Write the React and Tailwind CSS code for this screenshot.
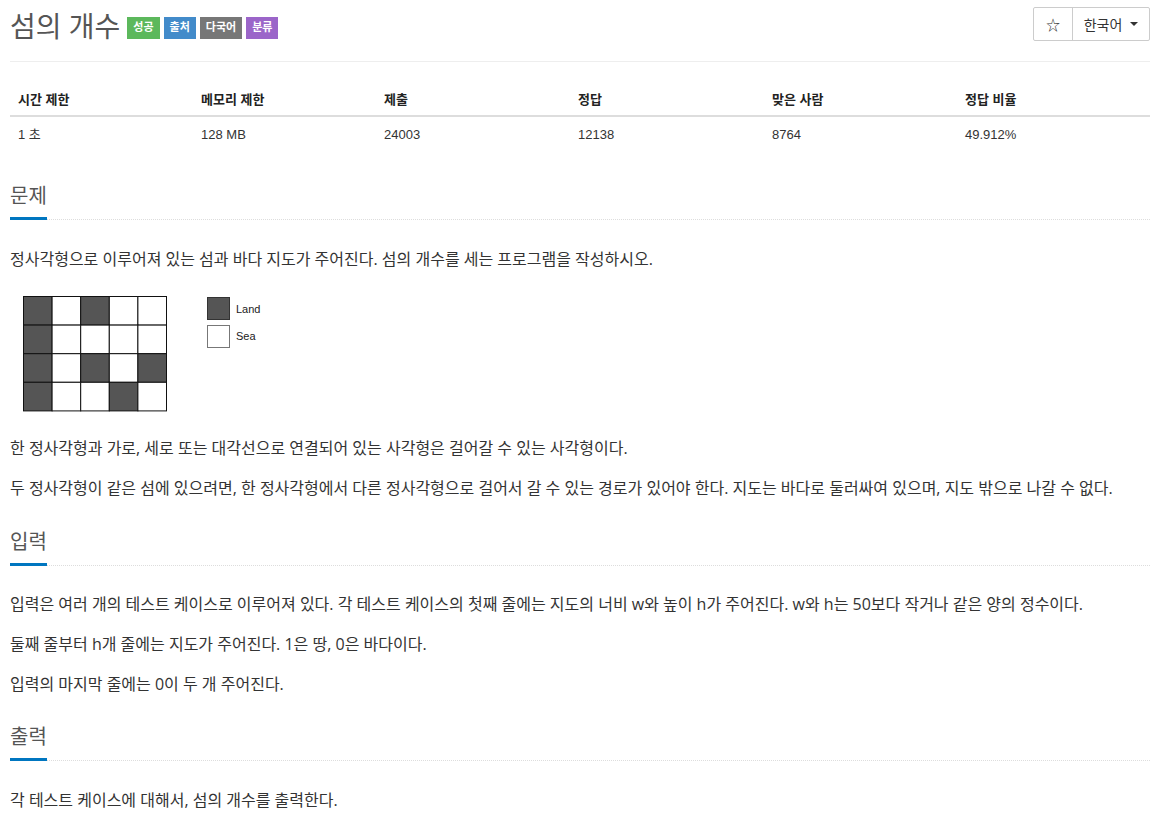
const stats = [
  { label: "시간 제한", value: "1 초" },
  { label: "메모리 제한", value: "128 MB" },
  { label: "제출", value: "24003" },
  { label: "정답", value: "12138" },
  { label: "맞은 사람", value: "8764" },
  { label: "정답 비율", value: "49.912%" },
];

const badges = [
  { text: "성공", cls: "bg-[#5cb85c]" },
  { text: "출처", cls: "bg-[#428bca]" },
  { text: "다국어", cls: "bg-[#777777]" },
  { text: "분류", cls: "bg-[#9b65c9]" },
];

const grid = [
  [1, 0, 1, 0, 0],
  [1, 0, 0, 0, 0],
  [1, 0, 1, 0, 1],
  [1, 0, 0, 1, 0],
];

function IslandMap() {
  const size = 28.6;
  return (
    <svg width="280" height="124" viewBox="0 0 280 124">
      <g transform="translate(13.5,8.5)">
        {grid.map((row, r) =>
          row.map((v, c) => (
            <rect
              key={`${r}-${c}`}
              x={c * size}
              y={r * size}
              width={size}
              height={size}
              fill={v ? "#555555" : "#ffffff"}
              stroke="#111"
              strokeWidth="1"
            />
          ))
        )}
      </g>
      <rect x="197.5" y="9.5" width="22" height="22" fill="#555555" stroke="#333" />
      <rect x="197.5" y="37.5" width="22" height="22" fill="#ffffff" stroke="#777" />
      <text x="226" y="25" fontSize="11" fontFamily="Liberation Sans, Arial, sans-serif" fill="#222">
        Land
      </text>
      <text x="226" y="52" fontSize="11" fontFamily="Liberation Sans, Arial, sans-serif" fill="#222">
        Sea
      </text>
    </svg>
  );
}

function Headline({ children }) {
  return (
    <div className="border-b border-dotted border-[#ddd] flex">
      <h2 className="text-[20px] leading-[28px] text-[#555] pb-[7px] border-b-[3px] border-[#0076c0] -mb-px">
        {children}
      </h2>
    </div>
  );
}

function P({ children }) {
  return <p className="text-[16px] leading-[24px] text-[#333] mb-[16px]">{children}</p>;
}

export default function App() {
  return (
    <div
      className="pl-[10px] pr-[9px] bg-white min-h-[815px]"
      style={{ fontFamily: '"Open Sans", "Noto Sans CJK KR", sans-serif' }}
    >
      <div className="flex items-start justify-between pt-[7px] pb-[18px] border-b border-[#eeeeee]">
        <div className="flex items-center gap-[7px] pt-[2px]">
          <h1 className="text-[28px] leading-[34px] text-[#555]">섬의 개수</h1>
          <div className="flex gap-[4px] mt-[3px]">
            {badges.map((b) => (
              <span
                key={b.text}
                className={`${b.cls} text-white text-[11px] font-bold h-[22px] px-[6px] flex items-center`}
              >
                {b.text}
              </span>
            ))}
          </div>
        </div>
        <div className="flex border border-[#cccccc] rounded-[2px] h-[34px] text-[14px] text-[#333]">
          <button className="w-[39px] flex items-center justify-center border-r border-[#cccccc]">☆</button>
          <button className="w-[76px] flex items-center justify-center gap-[8px]">
            한국어
            <span className="w-0 h-0 border-l-[4px] border-r-[4px] border-t-[4px] border-l-transparent border-r-transparent border-t-[#333]" />
          </button>
        </div>
      </div>

      <div
        className="mt-[22px] text-[#333]"
        style={{ fontFamily: '"Liberation Sans", "Noto Sans CJK KR", sans-serif' }}
      >
        <div className="grid grid-cols-[183px_183px_194px_194px_193px_193px] border-b-2 border-[#dddddd]">
          {stats.map((s) => (
            <div key={s.label} className="px-[8px] h-[31px] flex items-center text-[13px] font-bold text-[#222]">
              {s.label}
            </div>
          ))}
        </div>
        <div className="grid grid-cols-[183px_183px_194px_194px_193px_193px]">
          {stats.map((s) => (
            <div key={s.label} className="px-[8px] h-[36px] flex items-center text-[13px]">
              {s.value}
            </div>
          ))}
        </div>
      </div>

      <div className="mt-[29px]">
        <Headline>문제</Headline>
        <div className="pt-[27px]">
          <P>정사각형으로 이루어져 있는 섬과 바다 지도가 주어진다. 섬의 개수를 세는 프로그램을 작성하시오.</P>
          <div className="mt-[17px] mb-[24px]">
            <IslandMap />
          </div>
          <P>한 정사각형과 가로, 세로 또는 대각선으로 연결되어 있는 사각형은 걸어갈 수 있는 사각형이다.</P>
          <P>
            두 정사각형이 같은 섬에 있으려면, 한 정사각형에서 다른 정사각형으로 걸어서 갈 수 있는 경로가 있어야 한다. 지도는 바다로 둘러싸여 있으며, 지도 밖으로 나갈 수 없다.
          </P>
        </div>
      </div>

      <div className="mt-[28px]">
        <Headline>입력</Headline>
        <div className="pt-[26px]">
          <P>
            입력은 여러 개의 테스트 케이스로 이루어져 있다. 각 테스트 케이스의 첫째 줄에는 지도의 너비 w와 높이 h가 주어진다. w와 h는 50보다 작거나 같은 양의 정수이다.
          </P>
          <P>둘째 줄부터 h개 줄에는 지도가 주어진다. 1은 땅, 0은 바다이다.</P>
          <P>입력의 마지막 줄에는 0이 두 개 주어진다.</P>
        </div>
      </div>

      <div className="mt-[27px]">
        <Headline>출력</Headline>
        <div className="pt-[27px]">
          <P>각 테스트 케이스에 대해서, 섬의 개수를 출력한다.</P>
        </div>
      </div>
    </div>
  );
}
